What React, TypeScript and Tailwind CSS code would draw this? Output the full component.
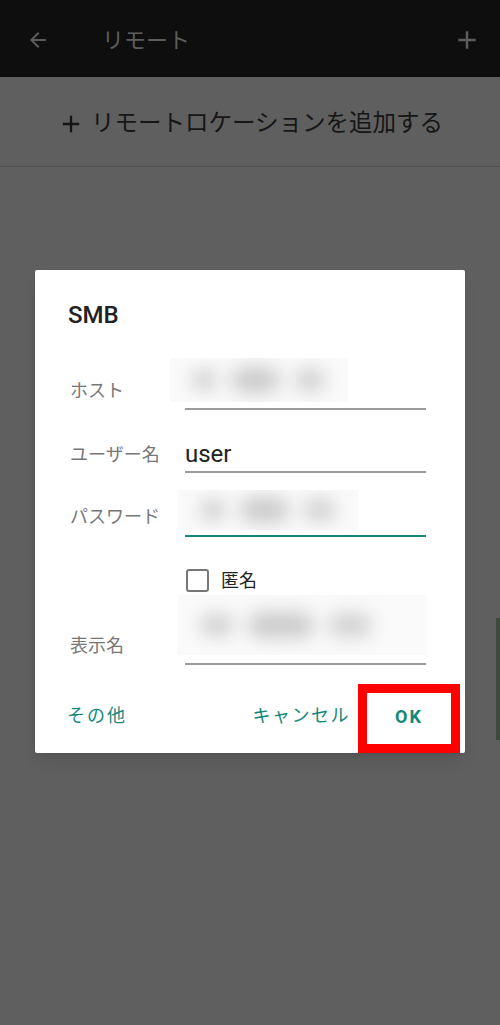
import React from "react";

const FONT = { fontFamily: 'Roboto, "Noto Sans CJK JP", sans-serif' };

function Blur({ className }: { className: string }) {
  return (
    <div className={`absolute bg-[#fafafa] overflow-hidden ${className}`}>
      <div className="absolute inset-0 flex items-center gap-[14px] px-[22px] blur-[9px]">
        <div className="h-[22px] w-[34px] rounded-full bg-[#d0d0d0]" />
        <div className="h-[26px] w-[66px] rounded-full bg-[#cbcbcb]" />
        <div className="h-[24px] w-[44px] rounded-full bg-[#d2d2d2]" />
      </div>
    </div>
  );
}

export default function App() {
  return (
    <div className="relative h-[1025px] w-[500px] overflow-hidden bg-[#5f5f5f]" style={FONT}>
      {/* top bar */}
      <div className="flex h-[77px] items-center bg-[#0e0e0e] pt-[3px]">
        <svg className="ml-[26px]" width="24" height="24" viewBox="0 0 24 24">
          <path d="M20 11H7.83l5.59-5.59L12 4l-8 8 8 8 1.41-1.41L7.83 13H20v-2z" fill="#5c5c5c" />
        </svg>
        <span className="ml-[52px] text-[22px] text-[#5c5c5c]">リモート</span>
        <svg className="ml-auto mr-[18px]" width="30" height="30" viewBox="0 0 24 24">
          <path d="M19 13h-6v6h-2v-6H5v-2h6V5h2v6h6v2z" fill="#5c5c5c" />
        </svg>
      </div>
      {/* add row */}
      <div className="flex h-[90px] items-center justify-center border-b border-[#525252] pt-[4px]">
        <svg width="28" height="28" viewBox="0 0 24 24" className="mr-[6px]">
          <path d="M19 13h-6v6h-2v-6H5v-2h6V5h2v6h6v2z" fill="#141414" />
        </svg>
        <span className="text-[23.5px] text-[#161616]">リモートロケーションを追加する</span>
      </div>

      {/* dialog */}
      <div className="mx-[35px] mt-[103px] h-[483px] rounded-[2px] bg-white shadow-lg">
        <div className="pl-[33px] pt-[31px] text-[24px] font-medium leading-[28px] text-[#212121]">SMB</div>

        {/* host */}
        <div className="flex h-[81px] items-end">
          <div className="w-[150px] pb-[7px] pl-[35px] text-[18px] leading-[24px] text-[#777]">ホスト</div>
          <div className="relative mr-[39px] flex-1">
            <Blur className="left-[-15px] top-[-50px] h-[44px] w-[178px]" />
            <div className="h-[2px] bg-[#9a9a9a]" />
          </div>
        </div>

        {/* user */}
        <div className="flex h-[63px] items-end">
          <div className="w-[150px] pb-[6px] pl-[35px] text-[18px] leading-[24px] text-[#777]">ユーザー名</div>
          <div className="mr-[39px] flex-1">
            <div className="pb-[3px] text-[24px] leading-[28px] text-[#212121]">user</div>
            <div className="h-[2px] bg-[#9a9a9a]" />
          </div>
        </div>

        {/* password */}
        <div className="flex h-[64px] items-end">
          <div className="w-[150px] pb-[8px] pl-[35px] text-[18px] leading-[24px] text-[#777]">パスワード</div>
          <div className="relative mr-[39px] flex-1">
            <Blur className="left-[-7px] top-[-45px] h-[40px] w-[180px]" />
            <div className="h-[2px] bg-[#13887a]" />
          </div>
        </div>

        {/* anonymous */}
        <div className="flex h-[64px] items-start pl-[151px] pt-[32px]">
          <div className="h-[23px] w-[23px] rounded-[3px] border-2 border-[#777]" />
          <span className="ml-[12px] text-[18px] leading-[23px] text-[#212121]">匿名</span>
        </div>

        {/* display name */}
        <div className="flex h-[64px] items-end">
          <div className="w-[150px] pb-[7px] pl-[35px] text-[18px] leading-[24px] text-[#777]">表示名</div>
          <div className="relative mr-[39px] flex-1">
            <Blur className="left-[-7px] top-[-68px] h-[60px] w-[249px]" />
            <div className="h-[2px] bg-[#9a9a9a]" />
          </div>
        </div>

        {/* buttons */}
        <div className="flex h-[88px] items-start">
          <span className="ml-[32px] mt-[39px] text-[18px] leading-[24px] tracking-[2px] text-[#13887a]">その他</span>
          <span className="ml-auto mt-[39px] text-[18px] leading-[24px] tracking-[1.5px] text-[#13887a]">キャンセル</span>
          <div className="ml-[8px] mr-[5px] mt-[19px] flex h-[69px] w-[102px] items-center justify-center border-[9px] border-[#ff0000] pb-[4px]">
            <span className="text-[18px] font-bold tracking-[2px] text-[#13887a]">OK</span>
          </div>
        </div>
      </div>

      {/* right edge sliver */}
      <div className="absolute right-0 top-[618px] h-[122px] w-[4px] bg-[#3e4a3e]" />
    </div>
  );
}
